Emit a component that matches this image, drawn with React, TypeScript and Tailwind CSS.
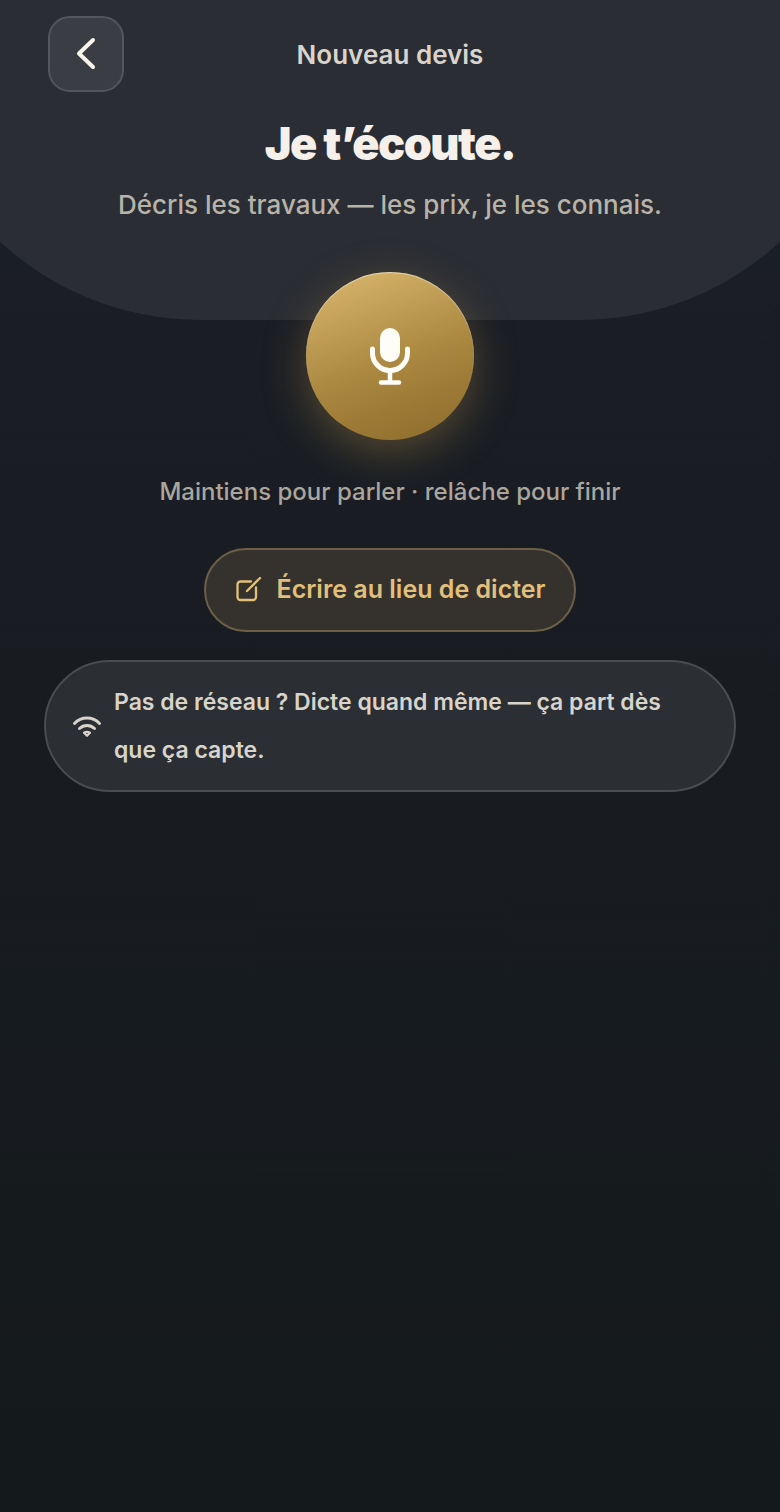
export default function App() {
  return (
    <div className="min-h-[1512px] overflow-hidden bg-[linear-gradient(180deg,#1c1f27_0%,#14191b_100%)] font-['Inter',sans-serif]">
      {/* Top panel, wider than the page so the corners run off the edge */}
      <div className="-mx-[95px] h-[320px] rounded-b-[295px] bg-[#2a2d33] px-[143px] pt-4">
        <div className="relative flex h-[76px] items-center justify-center">
          <button className="absolute left-0 top-0 flex h-[76px] w-[76px] items-center justify-center rounded-[22px] border-2 border-[#53565b] bg-[#3a3d43]">
            <svg width="32" height="40" viewBox="0 0 32 40" fill="none" stroke="#f8f4ec" strokeWidth="4" strokeLinecap="round" strokeLinejoin="round">
              <path d="M23 6 9 19.5 23 33" />
            </svg>
          </button>
          <span className="text-[26px] font-semibold text-[#d8d4cd]">Nouveau devis</span>
        </div>
        <h1 className="mt-[22px] text-center text-[45px] leading-[60px] font-black tracking-[-1.5px] text-[#f5f1ea]">Je t’écoute.</h1>
        <p className="mt-[14px] text-center text-[26px] leading-[34px] font-medium text-[#b8b3a9]">Décris les travaux — les prix, je les connais.</p>
      </div>

      <div className="flex flex-col items-center">
        {/* Mic button */}
        <button className="relative -mt-12 flex h-[168px] w-[168px] items-center justify-center rounded-full bg-[linear-gradient(160deg,#dcb96f_0%,#a9873f_55%,#8c6a2a_100%)] shadow-[0_12px_44px_rgba(201,158,75,0.34),inset_0_1px_1px_rgba(255,255,255,0.5)]">
          <svg width="60" height="70" viewBox="0 0 60 70" fill="none" stroke="#fffdf8" strokeLinecap="round">
            <rect x="20" y="7" width="20" height="34" rx="10" fill="#fffdf8" stroke="none" />
            <path d="M12.5 28v4a17.5 17.5 0 0 0 35 0v-4" strokeWidth="5" />
            <path d="M30 50v11" strokeWidth="4.5" strokeLinecap="butt" />
            <path d="M21 61.5h18" strokeWidth="4.5" />
          </svg>
        </button>

        <p className="mt-[36px] text-[24px] leading-[32px] font-medium text-[#aaa69d]">Maintiens pour parler · relâche pour finir</p>

        <button className="mt-[40px] flex h-[84px] w-[372px] items-center justify-center gap-[9px] rounded-full border-2 border-[#6b5f48] bg-[#35322e] pr-[1px] text-[25px] font-semibold text-[#e3c07a]">
          <svg width="34" height="40" viewBox="4 0 34 40" fill="none" stroke="#e3c07a" strokeWidth="2.3" strokeLinecap="round" strokeLinejoin="round">
            <path d="M21 11.5H10.5a3 3 0 0 0-3 3V27a3 3 0 0 0 3 3H23a3 3 0 0 0 3-3v-9.5" />
            <path d="M17 21 30 8" />
          </svg>
          Écrire au lieu de dicter
        </button>

        <div className="mt-[28px] flex h-[132px] w-[692px] items-center gap-[8px] rounded-[66px] border-2 border-[#494c51] bg-[#2b2e33] pl-[20px] pr-[60px]">
          <svg className="shrink-0" width="40" height="40" viewBox="0 0 40 40" fill="none" stroke="#d8d4cb" strokeWidth="3" strokeLinecap="round" strokeLinejoin="round">
            <path d="M8.5 17.5A17 17 0 0 1 33.5 17.5" />
            <path d="M13.5 22.5A11 11 0 0 1 28.5 22.5" />
            <path d="M18 26.8Q21 25 24 26.8L21 29.8Z" strokeWidth="2.2" />
          </svg>
          <p className="text-[23px] leading-[48px] font-semibold text-[#d8d4cb]">Pas de réseau ? Dicte quand même — ça part dès que ça capte.</p>
        </div>
      </div>
    </div>
  )
}
